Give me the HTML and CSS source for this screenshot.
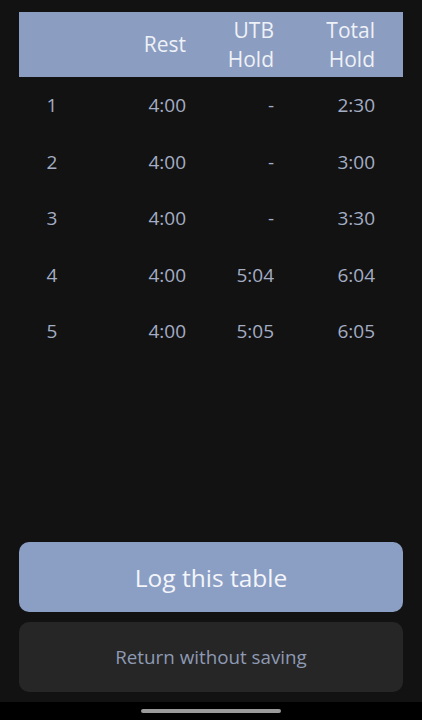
FILE: index.html
```html
<!DOCTYPE html>
<html lang="en">
<head>
  <meta charset="UTF-8">
  <meta name="viewport" content="width=device-width, initial-scale=1">
  <title>Table summary</title>
  <link rel="stylesheet" href="styles.css">
</head>
<body>

  <div class="screen">
    <div class="table">
      <!-- Cabecera -->
      <div class="row head">
        <span class="set"></span>
        <span>Rest</span>
        <span>UTB<br>Hold</span>
        <span>Total<br>Hold</span>
      </div>

      <div class="row">
        <span class="set">1</span><span>4:00</span><span>-</span><span>2:30</span>
      </div>
      <div class="row">
        <span class="set">2</span><span>4:00</span><span>-</span><span>3:00</span>
      </div>
      <div class="row">
        <span class="set">3</span><span>4:00</span><span>-</span><span>3:30</span>
      </div>
      <div class="row">
        <span class="set">4</span><span>4:00</span><span>5:04</span><span>6:04</span>
      </div>
      <div class="row">
        <span class="set">5</span><span>4:00</span><span>5:05</span><span>6:05</span>
      </div>
    </div>

    <div class="actions">
      <button class="btn primary">Log this table</button>
      <button class="btn secondary">Return without saving</button>
    </div>
  </div>

  <div class="nav-bar">
    <div class="handle"></div>
  </div>

</body>
</html>
```

FILE: styles.css
```css
html, body {
  height: 100%;
}

body {
  font-family: "Open Sans", sans-serif;
  margin: 0;
  background: #121212;
  display: flex;
  flex-direction: column;
}

.screen {
  flex: 1;
  display: flex;
  flex-direction: column;
  padding: 12px 19px 10px;
}

.table {
  flex: 1;
}

.row {
  display: grid;
  grid-template-columns: 66px 101px 88px 101px;
  height: 56.5px;
  align-items: center;
  font-size: 19px;
  color: #a3adc4;
}

.row span {
  text-align: right;
}

.row .set {
  text-align: center;
}

.head {
  height: 65px;
  background: #8b9dc0;
  color: #eef1f7;
  font-size: 21px;
  line-height: 29px;
}

.actions {
  display: flex;
  flex-direction: column;
  gap: 10px;
}

.btn {
  font-family: inherit;
  border: none;
  border-radius: 10px;
  height: 70px;
  width: 100%;
  cursor: pointer;
}

.primary {
  background: #8b9fc4;
  color: #f3f5fa;
  font-size: 24.5px;
}

.secondary {
  background: #262626;
  color: #8e9ab3;
  font-size: 18.8px;
}

.nav-bar {
  height: 18px;
  background: #000;
  display: flex;
  justify-content: center;
  align-items: center;
}

.handle {
  width: 140px;
  height: 4px;
  border-radius: 2px;
  background: #9a9a9a;
}
```
